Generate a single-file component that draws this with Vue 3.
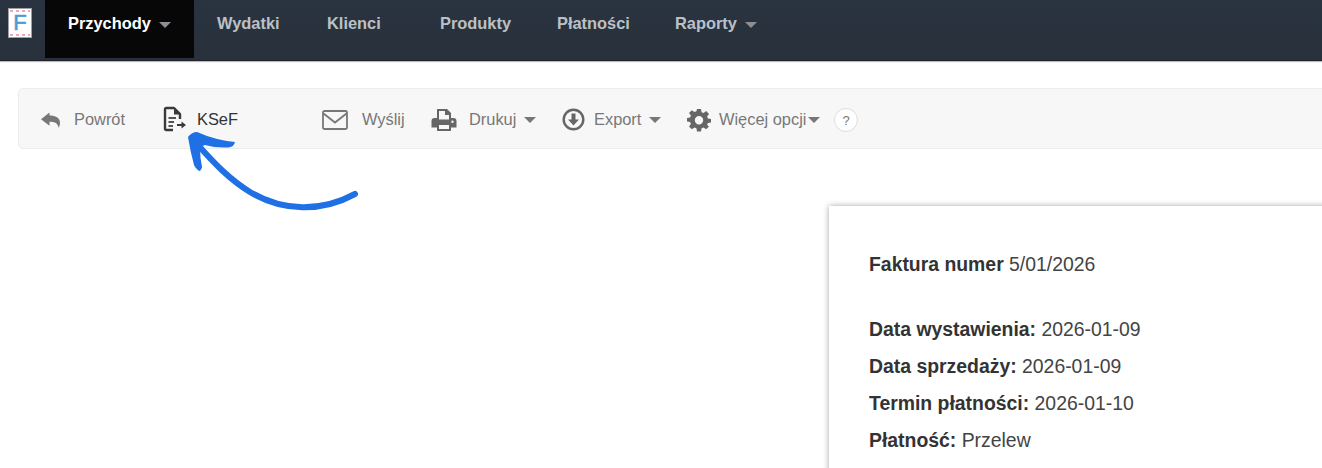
<script setup>
const navItems = [
  { label: 'Przychody', active: true, caret: true, width: 149 },
  { label: 'Wydatki', width: 110 },
  { label: 'Klienci', width: 113 },
  { label: 'Produkty', width: 117 },
  { label: 'Płatności', width: 118 },
  { label: 'Raporty', caret: true, width: 120 },
]
const invoiceRows = [
  { label: 'Data wystawienia:', value: '2026-01-09' },
  { label: 'Data sprzedaży:', value: '2026-01-09' },
  { label: 'Termin płatności:', value: '2026-01-10' },
  { label: 'Płatność:', value: 'Przelew' },
]
</script>

<template>
  <div class="page">
    <header class="navbar">
      <div class="logo">
        <i class="logo-dots"></i>
        <span class="logo-f">F</span>
        <i class="logo-dots"></i>
      </div>
      <nav class="nav">
        <a
          v-for="item in navItems"
          :key="item.label"
          class="nav-item"
          :class="{ active: item.active }"
          :style="{ width: item.width + 'px' }"
        >
          {{ item.label }}<i v-if="item.caret" class="caret nav-caret"></i>
        </a>
      </nav>
    </header>

    <section class="toolbar">
      <a class="tool tool-back">
        <svg class="ico" width="22" height="20" viewBox="0 0 22 20">
          <path fill="#777" d="M9.500 2.500 1 9.200l8.500 6.600v-4.100c4.600 0 8 .7 9.400 6.300.3-1.500 1.100-3.300 1.100-5 0-5.200-4.600-7.400-10.500-7.400z" />
        </svg>
        <span>Powrót</span>
      </a>
      <a class="tool tool-ksef">
        <svg class="ico" width="24" height="26" viewBox="0 0 24 26">
          <path fill="none" stroke="#3a3a3a" stroke-width="2.400" stroke-linejoin="round" d="M10 24H3.500C2.500 24 2 23.500 2 22.500V3.500C2 2.500 2.500 2 3.500 2H11l6 6v5" />
          <path fill="#3a3a3a" d="M11 1.500l7 7H11z" />
          <path fill="none" stroke="#555" stroke-width="2" d="M5.500 12H13M5.500 16H11M5.500 20H10" />
          <path fill="#3a3a3a" d="M14 18h4.500v-2.500l4.500 3.500-4.500 3.500V20H14z" />
        </svg>
        <span>KSeF</span>
      </a>
      <a class="tool tool-send">
        <svg class="ico" width="26" height="20" viewBox="0 0 26 20">
          <rect x="1" y="1" width="24" height="18" rx="1.500" fill="none" stroke="#777" stroke-width="1.800" />
          <path fill="none" stroke="#777" stroke-width="1.800" d="M1.500 3.500 13 12.500 24.500 3.500" />
        </svg>
        <span>Wyślij</span>
      </a>
      <a class="tool tool-print">
        <svg class="ico" width="26" height="24" viewBox="0 0 26 24">
          <path fill="#666" fill-rule="evenodd" d="M6 1h10l4 4v5h2.500C24.400 10 25.500 11.200 25.500 13v6.500H20V23H6v-3.500H.5V13C.5 11.200 1.600 10 3.500 10H6zM8 3v8.500h10V7h-4V3zM8 17v4h10v-4zM21.500 12.500a1.200 1.200 0 1 0 0 2.400 1.200 1.200 0 0 0 0-2.400z" />
        </svg>
        <span>Drukuj</span><i class="caret tool-caret"></i>
      </a>
      <a class="tool tool-export">
        <svg class="ico" width="23" height="23" viewBox="0 0 23 23">
          <circle cx="11.500" cy="11.500" r="9.800" fill="none" stroke="#666" stroke-width="2.400" />
          <path fill="#666" d="M9.500 5.500h4v6h3.500l-5.500 6-5.500-6h3.500z" />
        </svg>
        <span>Export</span><i class="caret tool-caret"></i>
      </a>
      <a class="tool tool-more">
        <svg class="ico" width="24" height="24" viewBox="0 0 24 24">
          <path fill="#666" fill-rule="evenodd" d="M10 1h4l.6 3.200 1.900.8L19.200 3.100 22 6l-1.900 2.600.8 1.900L24 11v3.500l-3.100.5-.8 1.900L22 18.500 19.200 21.300l-2.700-1.800-1.900.8L14 23.500h-4l-.6-3.200-1.900-.8-2.700 1.800L2 18.500l1.900-2.600-.8-1.900L0 13.500V10l3.100-.5.800-1.900L2 5l2.800-2.800 2.700 1.900 1.900-.8zM12 8a4.200 4.200 0 1 0 0 8.400A4.200 4.200 0 0 0 12 8z" />
        </svg>
        <span>Więcej opcji</span><i class="caret tool-caret tight"></i>
      </a>
      <span class="help">?</span>
    </section>

    <svg class="arrow" width="180" height="90" viewBox="0 0 180 90">
      <g transform="translate(-185 -128)">
        <path fill="none" stroke="#1f6fe5" stroke-width="6" stroke-linecap="round" d="M355 194C322 212 283 212 250 192C229 179 214 163 197 144" />
        <path fill="#1f6fe5" d="M188 137Q192 132 197 132Q215 140 235 142Q234 147 228 147.500Q215 148 205 145L200 147Q200 158 202 167Q201 171 199 171Q195 168 194 165Q190 150 188 137Z" />
      </g>
    </svg>

    <main class="content">
      <article class="invoice">
        <h1 class="invoice-title"><b>Faktura numer</b> 5/01/2026</h1>
        <p v-for="row in invoiceRows" :key="row.label" class="invoice-row">
          <b>{{ row.label }}</b> {{ row.value }}
        </p>
      </article>
    </main>
  </div>
</template>

<style>
html, body { margin: 0; overflow: hidden; background: #fff; }
</style>

<style scoped>
.page {
  position: relative;
  width: 1322px;
  height: 468px;
  overflow: hidden;
  font-family: "Liberation Sans", Arial, sans-serif;
  background: #fff;
}
.navbar {
  display: flex;
  height: 61px;
  box-sizing: border-box;
  background: linear-gradient(#2a3440, #27303b);
  border-bottom: 1px solid #1d242c;
  box-shadow: 0 1px 1px #bbb;
}
.logo {
  flex: none;
  box-sizing: border-box;
  width: 24px;
  height: 30px;
  margin: 8px 13px 0 8px;
  padding: 1px;
  background: #fff;
  border: 1px solid #9aa0a6;
  display: flex;
  flex-direction: column;
  align-items: center;
  justify-content: space-between;
}
.logo-dots {
  flex: none;
  width: 100%;
  height: 2px;
  background: repeating-linear-gradient(90deg, #f0a9b4 0 3px, #fff 3px 6px);
}
.logo-f {
  color: #4a9bd6;
  font-size: 22px;
  font-weight: 400;
  line-height: 20px;
  -webkit-text-stroke: 0.6px #4a9bd6;
}
.nav { display: flex; align-items: flex-start; }
.nav-item {
  box-sizing: border-box;
  height: 58px;
  padding: 13px 0 0 23px;
  color: #bcc0c6;
  font-size: 16.400px;
  font-weight: 700;
  line-height: 20px;
  white-space: nowrap;
}
.nav-item.active { background: #070707; color: #fff; }
.caret {
  display: inline-block;
  width: 0;
  height: 0;
  border-left: 6px solid transparent;
  border-right: 6px solid transparent;
  border-top: 6px solid #777;
  vertical-align: middle;
}
.nav-caret { margin-left: 8px; border-top-color: #8b8f94; }
.toolbar {
  display: flex;
  align-items: center;
  box-sizing: border-box;
  width: 1330px;
  height: 61px;
  margin: 27px 0 0 18px;
  padding: 2px 0 0 21px;
  background: #f7f7f7;
  border: 1px solid #ececec;
  border-radius: 5px;
  color: #777;
  font-size: 16.400px;
}
.tool {
  display: flex;
  align-items: center;
  flex: none;
  white-space: nowrap;
}
.ico { flex: none; }
.tool-back { width: 123px; }
.tool-back .ico { margin-right: 12px; }
.tool-ksef { width: 159px; color: #333; }
.tool-ksef .ico { margin-right: 10px; margin-bottom: 2px; }
.tool-send { width: 109px; }
.tool-send .ico { margin-right: 14px; }
.tool-print { width: 131px; }
.tool-print .ico { margin-right: 12px; }
.tool-export { width: 125px; }
.tool-export .ico { margin-right: 9px; }
.tool-more { width: 147px; }
.tool-more .ico { margin-right: 8px; }
.tool-caret { margin-left: 8px; }
.tool-caret.tight { margin-left: 2px; }
.help {
  flex: none;
  box-sizing: border-box;
  width: 24px;
  height: 24px;
  border: 1px solid #ddd;
  border-radius: 50%;
  background: #fff;
  color: #777;
  font-size: 13px;
  line-height: 23px;
  text-align: center;
}
.arrow {
  position: absolute;
  left: 185px;
  top: 128px;
}
.content {
  display: flex;
  padding: 57px 0 0 829px;
}
.invoice {
  flex: none;
  box-sizing: border-box;
  width: 600px;
  height: 400px;
  padding: 47px 0 0 40px;
  background: #fff;
  box-shadow: 0 0 6px rgba(0, 0, 0, 0.35);
  color: #444;
  font-size: 19.400px;
}
.invoice-title {
  margin: 0 0 36px;
  font-size: 19.400px;
  font-weight: 400;
  line-height: 22px;
}
.invoice-row {
  margin: 0;
  line-height: 37px;
}
b { font-weight: 700; color: #333; }
</style>
